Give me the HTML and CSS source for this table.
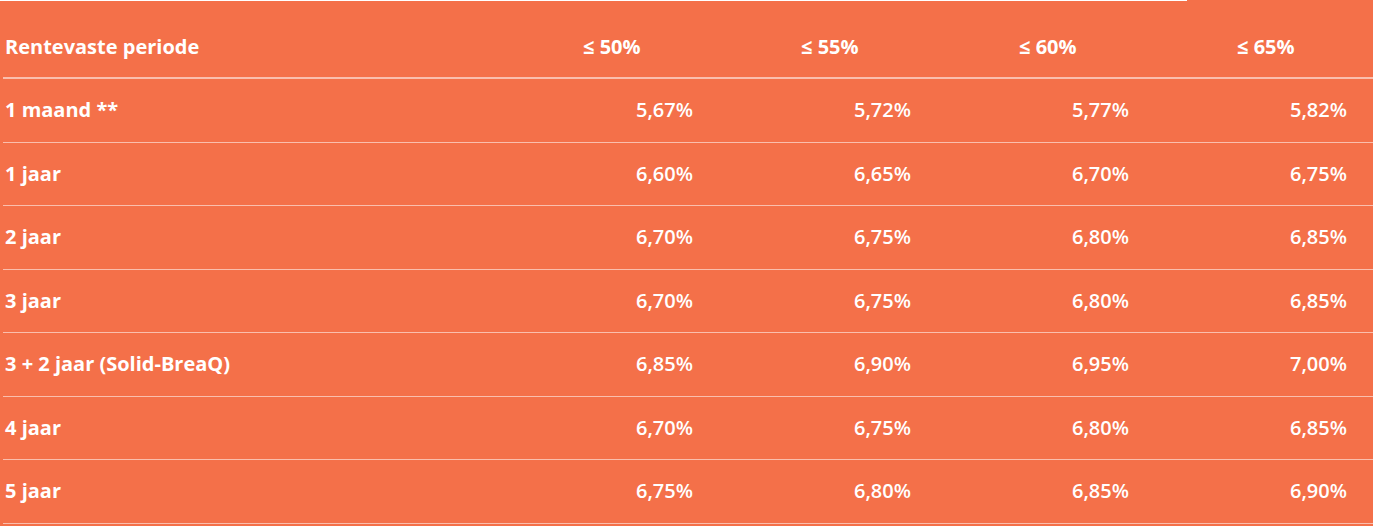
FILE: index.html
```html
<!DOCTYPE html>
<html lang="nl">
<head>
<meta charset="utf-8">
<title>Rentetabel</title>
<link rel="stylesheet" href="styles.css">
</head>
<body>
<div class="topline"></div>
<div class="rates">
  <div class="row head">
    <div class="label">Rentevaste periode</div>
    <div class="hcol">≤ 50%</div>
    <div class="hcol">≤ 55%</div>
    <div class="hcol">≤ 60%</div>
    <div class="hcol">≤ 65%</div>
  </div>
  <div class="row">
    <div class="label">1 maand **</div>
    <div class="val">5,67%</div><div class="val">5,72%</div><div class="val">5,77%</div><div class="val">5,82%</div>
  </div>
  <div class="row">
    <div class="label">1 jaar</div>
    <div class="val">6,60%</div><div class="val">6,65%</div><div class="val">6,70%</div><div class="val">6,75%</div>
  </div>
  <div class="row">
    <div class="label">2 jaar</div>
    <div class="val">6,70%</div><div class="val">6,75%</div><div class="val">6,80%</div><div class="val">6,85%</div>
  </div>
  <div class="row">
    <div class="label">3 jaar</div>
    <div class="val">6,70%</div><div class="val">6,75%</div><div class="val">6,80%</div><div class="val">6,85%</div>
  </div>
  <div class="row">
    <div class="label">3 + 2 jaar (Solid-BreaQ)</div>
    <div class="val">6,85%</div><div class="val">6,90%</div><div class="val">6,95%</div><div class="val">7,00%</div>
  </div>
  <div class="row">
    <div class="label">4 jaar</div>
    <div class="val">6,70%</div><div class="val">6,75%</div><div class="val">6,80%</div><div class="val">6,85%</div>
  </div>
  <div class="row">
    <div class="label">5 jaar</div>
    <div class="val">6,75%</div><div class="val">6,80%</div><div class="val">6,85%</div><div class="val">6,90%</div>
  </div>
</div>
</body>
</html>
```
FILE: styles.css
```css
html, body {
  margin: 0;
  padding: 0;
  background: #f47049;
  color: #ffffff;
  font-family: "Open Sans", "Noto Sans", Arial, sans-serif;
  font-size: 20px;
  overflow: hidden;
}

.topline {
  width: 1187px;
  height: 1px;
  background: #ffffff;
}

.rates {
  padding-left: 3px;
}

.row {
  display: grid;
  grid-template-columns: 498px repeat(4, 218px);
  align-items: center;
  height: 62.5px;
  line-height: 28px;
  border-bottom: 1px solid rgba(255, 255, 255, 0.55);
}

.row.head {
  height: 76px;
  align-items: start;
  border-bottom: 2px solid rgba(255, 255, 255, 0.55);
}

.head > div {
  padding-top: 32px;
}

.label {
  padding-left: 2px;
  font-weight: 700;
}

.hcol {
  padding-left: 82px;
  font-weight: 700;
}

.val {
  text-align: right;
  padding-right: 26px;
  font-weight: 600;
}
```
